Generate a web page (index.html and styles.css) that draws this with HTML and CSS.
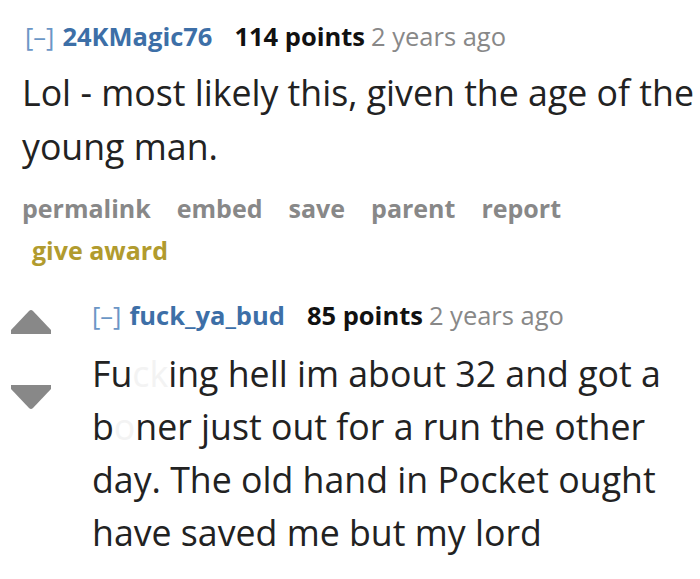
FILE: index.html
```html
<!DOCTYPE html>
<html lang="en">
<head>
    <meta charset="UTF-8">
    <title>comments</title>
    <link rel="stylesheet" href="styles.css">
</head>
<body>
<div class="comment">
    <p class="tagline">
        <a class="expand">[–]</a>
        <a class="author">24KMagic76</a>
        <span class="score">114 points</span>
        <time>2 years ago</time>
    </p>
    <div class="md">
        <p>Lol - most likely this, given the age of the young man.</p>
    </div>
    <ul class="buttons">
        <li>permalink</li>
        <li>embed</li>
        <li>save</li>
        <li>parent</li>
        <li>report</li>
        <li class="award">give award</li>
    </ul>
    <div class="child">
        <div class="comment nested">
            <div class="midcol">
                <svg class="arrow" width="42" height="26" viewBox="0 0 42 26">
                    <path d="M21 1 Q22 1 23 2 L41 21 L41 25 L1 25 L1 21 L19 2 Q20 1 21 1 Z" fill="#888"/>
                </svg>
                <svg class="arrow" width="42" height="26" viewBox="0 0 42 26">
                    <path d="M1 1 L41 1 L41 5 L23 24 Q22 25 21 25 Q20 25 19 24 L1 5 Z" fill="#888"/>
                </svg>
            </div>
            <div class="entry">
                <p class="tagline">
                    <a class="expand">[–]</a>
                    <a class="author">fuck_ya_bud</a>
                    <span class="score">85 points</span>
                    <time>2 years ago</time>
                </p>
                <div class="md">
                    <p>Fu<span class="censor">ck</span>ing hell im about 32 and got a b<span class="censor">o</span>ner just out for a run the other day. The old hand in Pocket ought have saved me but my lord</p>
                </div>
            </div>
        </div>
    </div>
</div>
</body>
</html>
```

FILE: styles.css
```css
* {
    font-family: 'Open Sans', sans-serif;
}
html, body {
    margin: 0;
    padding: 0;
}
body {
    background-color: #ffffff;
    width: 700px;
    overflow: hidden;
}
p {
    margin: 0;
}
a {
    cursor: pointer;
}

.comment {
    padding: 20px 0 0 22px;
}
.comment > .tagline {
    padding-left: 3px;
}

.tagline {
    font-size: 25.5px;
    line-height: 32px;
    color: #888888;
    display: flex;
    align-items: baseline;
    gap: 6px;
}
.tagline .expand {
    color: #6b96c6;
    font-weight: normal;
    margin-right: 2px;
}
.tagline .author {
    color: #3d6fa7;
    font-weight: bold;
    margin-right: 16px;
}
.tagline .score {
    color: #111111;
    font-weight: bold;
}

.md {
    font-size: 35.7px;
    line-height: 54px;
    color: #222222;
    margin-top: 13px;
}
.censor {
    color: #f3f3f3;
}

.buttons {
    list-style: none;
    margin: 14px 0 0 0;
    padding: 0;
    display: flex;
    flex-wrap: wrap;
    column-gap: 26px;
    font-size: 25px;
    line-height: 42px;
    font-weight: bold;
    color: #888888;
    width: 640px;
}
.buttons .award {
    color: #b19b2e;
    margin-left: 10px;
    width: 100%;
}

.child {
    margin-top: 28px;
    margin-left: -22px;
}
.nested {
    padding: 0 0 0 10px;
    display: flex;
    gap: 40px;
}
.midcol {
    display: flex;
    flex-direction: column;
    gap: 49px;
    padding-top: 10px;
}
.arrow {
    display: block;
}
.entry {
    flex: 1;
}
.entry .md {
    margin-top: 16px;
    line-height: 53px;
}
```
